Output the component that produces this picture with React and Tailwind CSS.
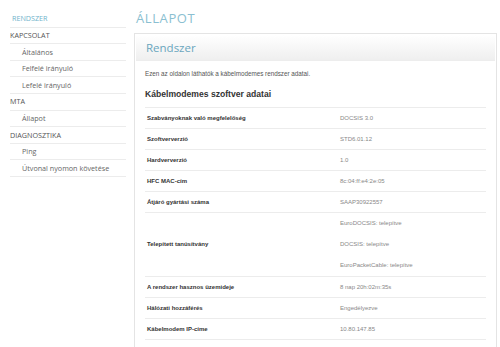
import React from "react";

const side = [
  { t: "RENDSZER", lvl: 0, active: true },
  { t: "KAPCSOLAT", lvl: 0 },
  { t: "Általános", lvl: 1 },
  { t: "Felfelé irányuló", lvl: 1 },
  { t: "Lefelé irányuló", lvl: 1 },
  { t: "MTA", lvl: 0 },
  { t: "Állapot", lvl: 1 },
  { t: "DIAGNOSZTIKA", lvl: 0 },
  { t: "Ping", lvl: 1 },
  { t: "Útvonal nyomon követése", lvl: 1 },
];

const rows = [
  ["Szabványoknak való megfelelőség", ["DOCSIS 3.0"]],
  ["Szoftververzió", ["STD6.01.12"]],
  ["Hardververzió", ["1.0"]],
  ["HFC MAC-cím", ["8c:04:ff:e4:2e:05"]],
  ["Átjáró gyártási száma", ["SAAP30922557"]],
  ["Telepített tanúsítvány", ["EuroDOCSIS: telepítve", "DOCSIS: telepítve", "EuroPacketCable: telepítve"]],
  ["A rendszer hasznos üzemideje", ["8 nap 20h:02m:35s"]],
  ["Hálózati hozzáférés", ["Engedélyezve"]],
  ["Kábelmodem IP-címe", ["10.80.147.85"]],
];

export default function App() {
  return (
    <div className="w-[500px] h-[347px] overflow-hidden bg-white flex" style={{ fontFamily: '"Open Sans", sans-serif' }}>
      <div className="w-[126px] shrink-0 pl-[10px] pt-[11px]">
        {side.map((s, i) => (
          <div
            key={i}
            className={
              s.active
                ? "h-[16.6px] flex items-center border-b border-[#ececec] text-[7.2px] pl-[2px] text-[#6fb3cb]"
                : s.lvl
                ? "h-[16.6px] flex items-center border-b border-[#ececec] text-[7.2px] pl-[12px] text-[#666]"
                : "h-[16.6px] flex items-center border-b border-[#ececec] text-[7.2px] pl-0 text-[#555]"
            }
          >
            {s.t}
          </div>
        ))}
      </div>
      <div className="flex-1 pl-[8px] pr-[3px]">
        <div className="h-[33px] pl-[2px] pt-[8px] text-[13px] tracking-[0.6px] text-[#8bbfd1] leading-[20px]">ÁLLAPOT</div>
        <div className="border border-[#e4e4e4] h-[330px]">
          <div className="h-[26px] mx-[1px] mt-[1px] bg-gradient-to-b from-white to-[#efefef] flex items-center pl-[10px] text-[11.5px] text-[#6aa6be] border-b border-[#ededed]">
            Rendszer
          </div>
          <div className="px-[10px]" style={{ fontFamily: '"Liberation Sans", Arial, sans-serif' }}>
            <div className="pt-[8px] text-[6.3px] text-[#555] leading-[9px]">Ezen az oldalon láthatók a kábelmodemes rendszer adatai.</div>
            <div className="pt-[10px] pb-[7px] text-[8.6px] font-bold text-[#333] leading-[12px] border-b border-[#ececec]">Kábelmodemes szoftver adatai</div>
            {rows.map(([l, vs], i) => (
              <div key={i} className="flex border-b border-[#ececec] text-[6px]">
                <div className="w-[195px] pl-[2px] font-bold text-[#333] flex items-center">{l}</div>
                <div className="flex-1 text-[#888]">
                  {vs.map((v, j) => (
                    <div key={j} className={vs.length > 1 ? "h-[21px] flex items-center" : "h-[20px] flex items-center"}>{v}</div>
                  ))}
                </div>
              </div>
            ))}
          </div>
        </div>
      </div>
    </div>
  );
}
